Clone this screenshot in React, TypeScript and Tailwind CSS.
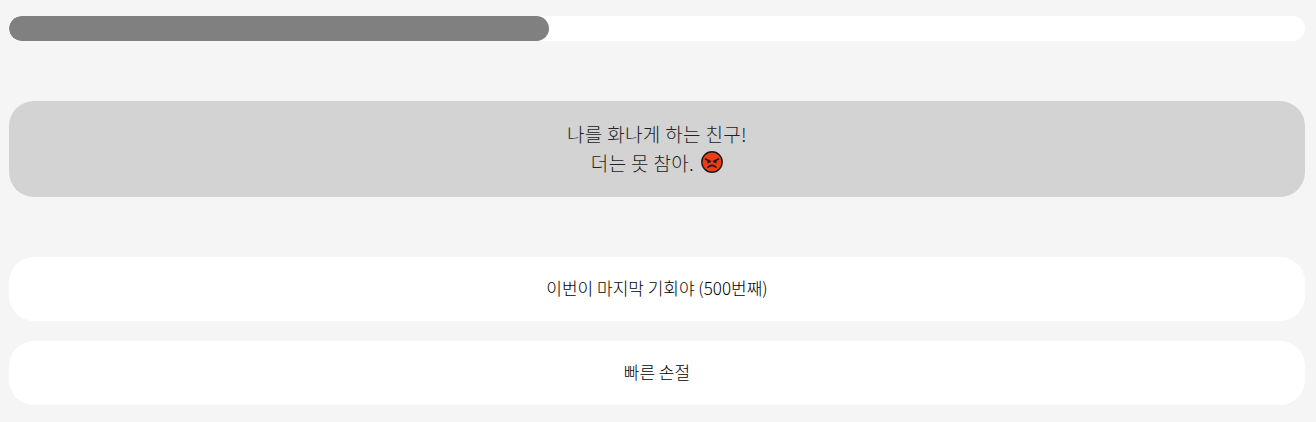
export default function App() {
  const answers = ["이번이 마지막 기회야 (500번째)", "빠른 손절"];

  return (
    <div className="min-h-[422px] bg-[#f5f5f5] pl-[9px] pr-[11px] pt-4 font-['Noto_Sans_CJK_KR','Noto_Sans',sans-serif] font-light text-black">
      <div className="h-[25px] overflow-hidden rounded-[12.5px] bg-white">
        <div className="h-full w-[540px] rounded-[12.5px] bg-[#808080]"></div>
      </div>

      <div className="mt-[60px] flex h-24 flex-col items-center justify-center rounded-[25px] bg-[#d3d3d3] pb-[3px] text-center text-[19px] leading-[29px] tracking-[0.35px] text-[#222]">
        <div>나를 화나게 하는 친구!</div>
        <div className="flex items-center">
          더는 못 참아.
          <svg className="ml-[7px] h-[22px] w-[22px]" viewBox="0 0 22 22">
            <circle cx="11" cy="11" r="10.2" fill="#ee3a16" stroke="#1a1a1a" strokeWidth="1.4" />
            <path d="M4.5 8 L9.5 10.5 M17.5 8 L12.5 10.5" stroke="#1a1a1a" strokeWidth="1.5" strokeLinecap="round" />
            <circle cx="7.5" cy="11" r="1.2" fill="#1a1a1a" />
            <circle cx="14.5" cy="11" r="1.2" fill="#1a1a1a" />
            <path d="M7 16.2 Q11 12.6 15 16.2" fill="none" stroke="#1a1a1a" strokeWidth="1.5" strokeLinecap="round" />
          </svg>
        </div>
      </div>

      <div className="mt-[60px] flex flex-col gap-5">
        {answers.map((answer) => (
          <div
            key={answer}
            className="flex h-16 items-center justify-center rounded-[25px] bg-white pb-[2px] text-[17px]"
          >
            {answer}
          </div>
        ))}
      </div>
    </div>
  );
}
